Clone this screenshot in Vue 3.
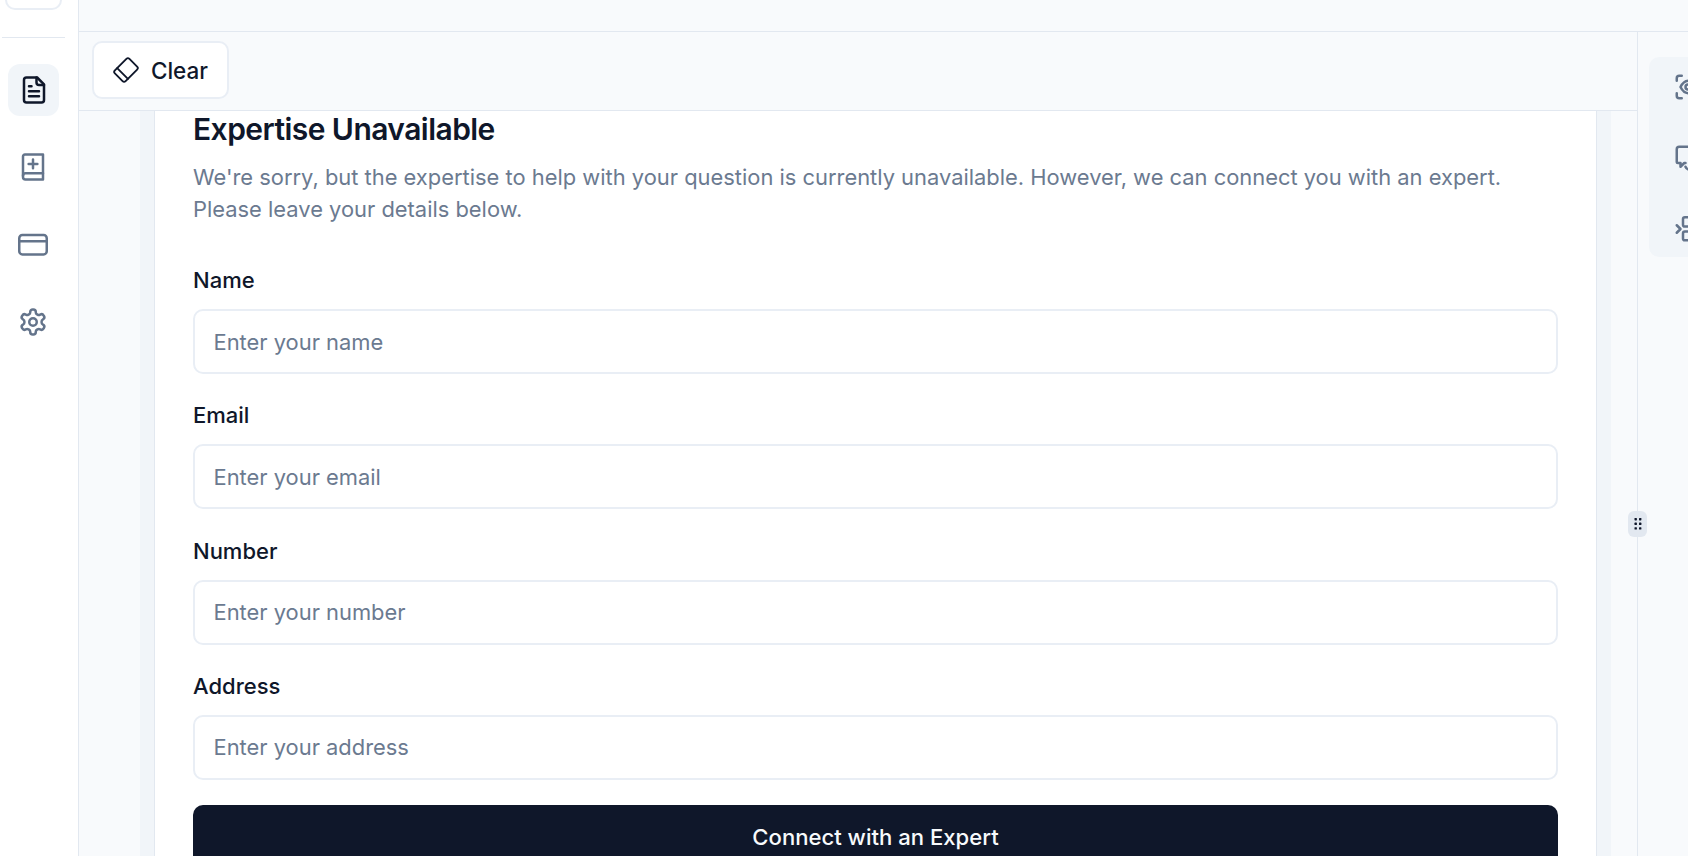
<script setup>
const navItems = [
  { id: 'doc', active: true },
  { id: 'book' },
  { id: 'card' },
  { id: 'gear' },
]
const fields = [
  { label: 'Name', placeholder: 'Enter your name' },
  { label: 'Email', placeholder: 'Enter your email' },
  { label: 'Number', placeholder: 'Enter your number' },
  { label: 'Address', placeholder: 'Enter your address' },
]
</script>

<template>
  <div class="app">
    <aside class="sidebar">
      <div class="side-top"><div class="side-top-btn"></div></div>
      <div class="side-divider"></div>
      <nav class="nav">
        <div v-for="item in navItems" :key="item.id" class="nav-item" :class="{ active: item.active }">
          <svg v-if="item.id === 'doc'" viewBox="0 0 24 24" class="icon"><path d="M14.5 2H6a2 2 0 0 0-2 2v16a2 2 0 0 0 2 2h12a2 2 0 0 0 2-2V7.500z"/><path d="M14 2v4a2 2 0 0 0 2 2h4"/><path d="M16 13H8M16 17H8M10 9H8"/></svg>
          <svg v-else-if="item.id === 'book'" viewBox="0 0 24 24" class="icon"><path d="M20 2v20H6a2 2 0 0 1-2-2V3.500A1.500 1.500 0 0 1 5.500 2z"/><path d="M4 19a2 2 0 0 1 2-2h14"/><path d="M8.500 9.500h7M12 6v7"/></svg>
          <svg v-else-if="item.id === 'card'" viewBox="0 0 24 24" class="icon"><rect x="1" y="4" width="22" height="15.500" rx="2.500"/><path d="M1 9h22"/></svg>
          <svg v-else viewBox="0 0 24 24" class="icon"><path d="M12.220 2h-.44a2 2 0 0 0-2 2v.18a2 2 0 0 1-1 1.730l-.43.25a2 2 0 0 1-2 0l-.15-.08a2 2 0 0 0-2.730.73l-.22.38a2 2 0 0 0 .73 2.730l.15.1a2 2 0 0 1 1 1.720v.51a2 2 0 0 1-1 1.740l-.15.09a2 2 0 0 0-.73 2.730l.22.38a2 2 0 0 0 2.730.73l.15-.08a2 2 0 0 1 2 0l.43.25a2 2 0 0 1 1 1.730V20a2 2 0 0 0 2 2h.44a2 2 0 0 0 2-2v-.18a2 2 0 0 1 1-1.730l.43-.25a2 2 0 0 1 2 0l.15.08a2 2 0 0 0 2.730-.73l.22-.39a2 2 0 0 0-.73-2.730l-.15-.08a2 2 0 0 1-1-1.740v-.5a2 2 0 0 1 1-1.740l.15-.09a2 2 0 0 0 .73-2.730l-.22-.38a2 2 0 0 0-2.730-.73l-.15.08a2 2 0 0 1-2 0l-.43-.25a2 2 0 0 1-1-1.730V4a2 2 0 0 0-2-2z"/><circle cx="12" cy="12" r="3"/></svg>
        </div>
      </nav>
    </aside>

    <div class="center">
      <div class="topbar"></div>
      <div class="workspace">
        <main class="main">
          <div class="toolbar">
            <button class="clear-btn">
              <svg viewBox="0 0 24 24" class="eraser"><rect x="2.500" y="5" width="19" height="14" rx="2" transform="rotate(-45 12 12)"/><path d="M7.500 5v14" transform="rotate(-45 12 12)"/></svg>
              <span>Clear</span>
            </button>
          </div>
          <div class="scroller">
            <div class="strip">
              <section class="card">
                <h2 class="title">Expertise Unavailable</h2>
                <p class="desc">We're sorry, but the expertise to help with your question is currently unavailable. However, we can connect you with an expert. Please leave your details below.</p>
                <form class="form" @submit.prevent>
                  <div v-for="f in fields" :key="f.label" class="field">
                    <label class="label">{{ f.label }}</label>
                    <input class="input" :placeholder="f.placeholder" />
                  </div>
                  <button class="submit">Connect with an Expert</button>
                </form>
              </section>
            </div>
          </div>
        </main>
        <aside class="right">
          <div class="handle">
            <svg viewBox="0 0 10 14" class="grip"><g fill="#0f172a"><rect x="1.500" y="1" width="2.400" height="2.400" rx=".6"/><rect x="6" y="1" width="2.400" height="2.400" rx=".6"/><rect x="1.500" y="5.600" width="2.400" height="2.400" rx=".6"/><rect x="6" y="5.600" width="2.400" height="2.400" rx=".6"/><rect x="1.500" y="10.200" width="2.400" height="2.400" rx=".6"/><rect x="6" y="10.200" width="2.400" height="2.400" rx=".6"/></g></svg>
          </div>
          <div class="tools">
            <div class="tool"><svg viewBox="0 0 24 24" class="icon"><path d="M3 7V5a2 2 0 0 1 2-2h2M17 3h2a2 2 0 0 1 2 2v2M21 17v2a2 2 0 0 1-2 2h-2M7 21H5a2 2 0 0 1-2-2v-2"/><circle cx="12" cy="12" r="2"/><path d="M6 12c1.500-3 3.600-5 6.500-5s5 2 6.500 5c-1.500 3-3.600 5-6.500 5s-5-2-6.500-5z"/></svg></div>
            <div class="tool"><svg viewBox="0 0 24 24" class="icon"><path d="M21 13V5a2 2 0 0 0-2-2H5a2 2 0 0 0-2 2v10a1 1 0 0 0 1 1h2v3l3-3h1"/><path d="M10 19a3.500 3.500 0 0 0 6 1"/></svg></div>
            <div class="tool"><svg viewBox="0 0 24 24" class="icon"><path d="m3 9 3 3-3 3"/><rect x="8" y="2.500" width="12" height="7.500" rx="1.500"/><rect x="8" y="14" width="12" height="7" rx="1.500"/></svg></div>
          </div>
        </aside>
      </div>
    </div>
  </div>
</template>

<style>
html, body { margin: 0; height: 100%; overflow: hidden; background: #fff; }
</style>

<style scoped>
.app {
  display: flex;
  width: 1688px;
  height: 856px;
  overflow: hidden;
  font-family: Inter, "Liberation Sans", sans-serif;
  color: #0f172a;
}
.sidebar {
  flex: 0 0 79px;
  box-sizing: border-box;
  background: #fff;
  border-right: 1px solid #e2e8f0;
  display: flex;
  flex-direction: column;
  overflow: hidden;
}
.side-top { height: 37px; padding: 0 0 0 5px; overflow: hidden; }
.side-top-btn {
  width: 57px;
  height: 10px;
  box-sizing: border-box;
  border: 2px solid #e9eef5;
  border-top: none;
  border-radius: 0 0 10px 10px;
}
.side-divider { height: 1px; margin: 0 13px 0 2px; background: #e2e8f0; }
.nav {
  display: flex;
  flex-direction: column;
  gap: 26px;
  padding: 26px 0 0 8px;
}
.nav-item {
  width: 50px;
  height: 51.500px;
  border-radius: 12px;
  display: flex;
  align-items: center;
  justify-content: center;
  color: #64748b;
}
.nav-item.active { background: #f1f5f9; color: #0f172a; width: 51px; }
.icon {
  width: 30px;
  height: 30px;
  fill: none;
  stroke: currentColor;
  stroke-width: 2;
  stroke-linecap: round;
  stroke-linejoin: round;
}
.center {
  flex: 1;
  min-width: 0;
  display: flex;
  flex-direction: column;
  background: #f8fafc;
}
.topbar {
  flex: 0 0 32px;
  box-sizing: border-box;
  border-bottom: 1px solid #e2e8f0;
}
.workspace { flex: 1; min-height: 0; display: flex; }
.main {
  flex: 0 0 1558px;
  min-width: 0;
  box-sizing: border-box;
  display: flex;
  flex-direction: column;
}
.toolbar {
  flex: 0 0 79px;
  box-sizing: border-box;
  border-bottom: 1px solid #e2e8f0;
  padding: 9px 0 0 13px;
}
.clear-btn {
  width: 137px;
  height: 58px;
  box-sizing: border-box;
  background: #fff;
  border: 2px solid #e9eef5;
  border-radius: 10px;
  display: flex;
  align-items: center;
  justify-content: center;
  gap: 12px;
  font: 500 22.500px Inter, "Liberation Sans", sans-serif;
  color: #0f172a;
  padding: 0;
}
.eraser {
  width: 26px;
  height: 26px;
  fill: none;
  stroke: currentColor;
  stroke-width: 1.700;
  stroke-linecap: round;
  stroke-linejoin: round;
}
.scroller { flex: 1; min-height: 0; overflow: hidden; padding: 0 26px 0 61px; }
.strip {
  height: 100%;
  padding: 0 14px;
  background: #f1f5f9;
}
.card {
  height: 100%;
  box-sizing: border-box;
  background: #fff;
  border-left: 1px solid #e2e8f0;
  border-right: 1px solid #e2e8f0;
  padding: 0 38px;
}
.title {
  margin: 0;
  font-size: 30px;
  line-height: 36px;
  font-weight: 600;
  letter-spacing: -0.550px;
  color: #0f172a;
}
.desc {
  margin: 14px 0 0;
  width: 1340px;
  font-size: 21.900px;
  line-height: 32px;
  color: #6b7a90;
}
.form { margin-top: 39px; display: flex; flex-direction: column; }
.field { display: flex; flex-direction: column; height: 135.330px; flex: none; }
.label {
  font-size: 22px;
  line-height: 32px;
  font-weight: 500;
  color: #0f172a;
}
.input {
  margin-top: 13px;
  height: 65px;
  box-sizing: border-box;
  border: 2px solid #e9eef5;
  border-radius: 10px;
  padding: 0 18.500px;
  font: 400 21.900px Inter, "Liberation Sans", sans-serif;
  color: #0f172a;
  background: #fff;
  outline: none;
}
.input::placeholder { color: #6b7a90; opacity: 1; }
.submit {
  height: 64px;
  flex: none;
  background: #0f172a;
  color: #f8fafc;
  border: none;
  border-radius: 10px;
  font: 500 22.100px Inter, "Liberation Sans", sans-serif;
  padding: 0;
}
.right {
  position: relative;
  flex: 0 0 auto;
  width: 250px;
  box-sizing: border-box;
  border-left: 1px solid #e2e8f0;
  padding: 25px 0 0 11px;
}
.handle {
  position: absolute;
  left: -10px;
  top: 479px;
  width: 19px;
  height: 26px;
  border-radius: 6px;
  background: #e2e8f0;
  display: flex;
  align-items: center;
  justify-content: center;
}
.grip { width: 10px; height: 14px; }
.tools {
  width: 150px;
  height: 200px;
  background: #f1f5f9;
  border-radius: 10px;
  display: flex;
  flex-direction: column;
  align-items: flex-start;
  padding: 15px 0 0 24px;
  box-sizing: border-box;
  gap: 41px;
  color: #64748b;
}
.tool { height: 30px; }
</style>
